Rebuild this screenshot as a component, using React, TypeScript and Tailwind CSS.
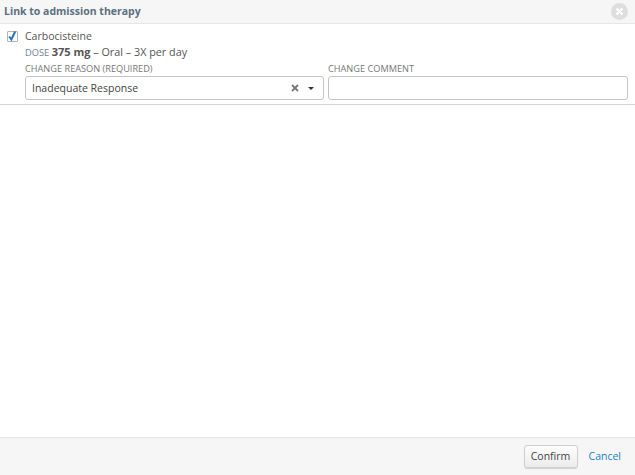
export default function App() {
  return (
    <div className="flex h-[475px] w-[635px] flex-col bg-white font-['Open_Sans','Noto_Sans',sans-serif] text-[10.8px] text-[#444]">
      <header className="flex h-[24px] shrink-0 items-center justify-between border-b border-[#e6e6e6] bg-[#f6f6f6] pl-[4px] pr-[7px]">
        <h1 className="text-[10.5px] font-bold text-[#5c7080]">Link to admission therapy</h1>
        <svg width="17" height="17" viewBox="0 0 17 17" className="mt-[-1px]">
          <circle cx="8.5" cy="8.5" r="8.5" fill="#dedede" />
          <path d="M5.5 5.5l6 6M11.5 5.5l-6 6" stroke="#fff" strokeWidth="2.4" />
        </svg>
      </header>
      <section className="shrink-0 border-b border-[#d4d4d4] pb-[4px] pl-[7px] pr-[7px] pt-[5px]">
        <div className="flex items-center gap-[7px] leading-[15px]">
          <span className="flex h-[11px] w-[11px] items-center justify-center rounded-[1px] border border-[#b4b4c0] bg-white">
            <svg width="11" height="11" viewBox="0 0 11 11" className="overflow-visible">
              <path d="M2.2 5.5l2.2 3 3.8-8" stroke="#2b74c4" strokeWidth="2" fill="none" />
            </svg>
          </span>
          <span className="text-[10.5px] text-[#555]">Carbocisteine</span>
        </div>
        <div className="ml-[18px] leading-[16px] text-[#555]">
          <span className="text-[9.3px] text-[#6e7f99]">DOSE </span>
          <b className="text-[11px] font-bold text-[#555]">375 mg</b> – Oral – 3X per day
        </div>
        <div className="ml-[18px] mt-[1px] grid grid-cols-[299px_300px] gap-x-[4px]">
          <label className="flex flex-col">
            <span className="text-[9.2px] leading-[14px] text-[#777]">CHANGE REASON (REQUIRED)</span>
            <div className="flex h-[24px] items-center rounded-[3px] border border-[#c4c4c4] bg-white pl-[6px] pr-[9px]">
              <span className="flex-1 pt-[1px] text-[10.5px] text-[#444]">Inadequate Response</span>
              <svg width="8" height="8" viewBox="0 0 8 8" className="mr-[9px]">
                <path d="M1 1l6 6M7 1L1 7" stroke="#777" strokeWidth="1.8" />
              </svg>
              <svg width="6" height="3" viewBox="0 0 6 3">
                <path d="M0 0h6L3 3z" fill="#333" />
              </svg>
            </div>
          </label>
          <label className="flex flex-col">
            <span className="text-[9.2px] leading-[14px] text-[#777]">CHANGE COMMENT</span>
            <div className="h-[24px] rounded-[3px] border border-[#c4c4c4] bg-white" />
          </label>
        </div>
      </section>
      <main className="flex-1" />
      <footer className="flex h-[38px] shrink-0 items-center justify-end border-t border-[#e6e6e6] bg-[#f6f6f6] pr-[14px]">
        <button className="h-[23px] w-[54px] rounded-[3px] border border-[#cfcfcf] bg-[linear-gradient(#fdfdfd,#ececec)] text-[10.5px] text-[#444] shadow-[0_1px_1px_rgba(0,0,0,0.15)]">
          Confirm
        </button>
        <a className="ml-[11px] text-[10.5px] text-[#1c7fc4]">Cancel</a>
      </footer>
    </div>
  );
}
